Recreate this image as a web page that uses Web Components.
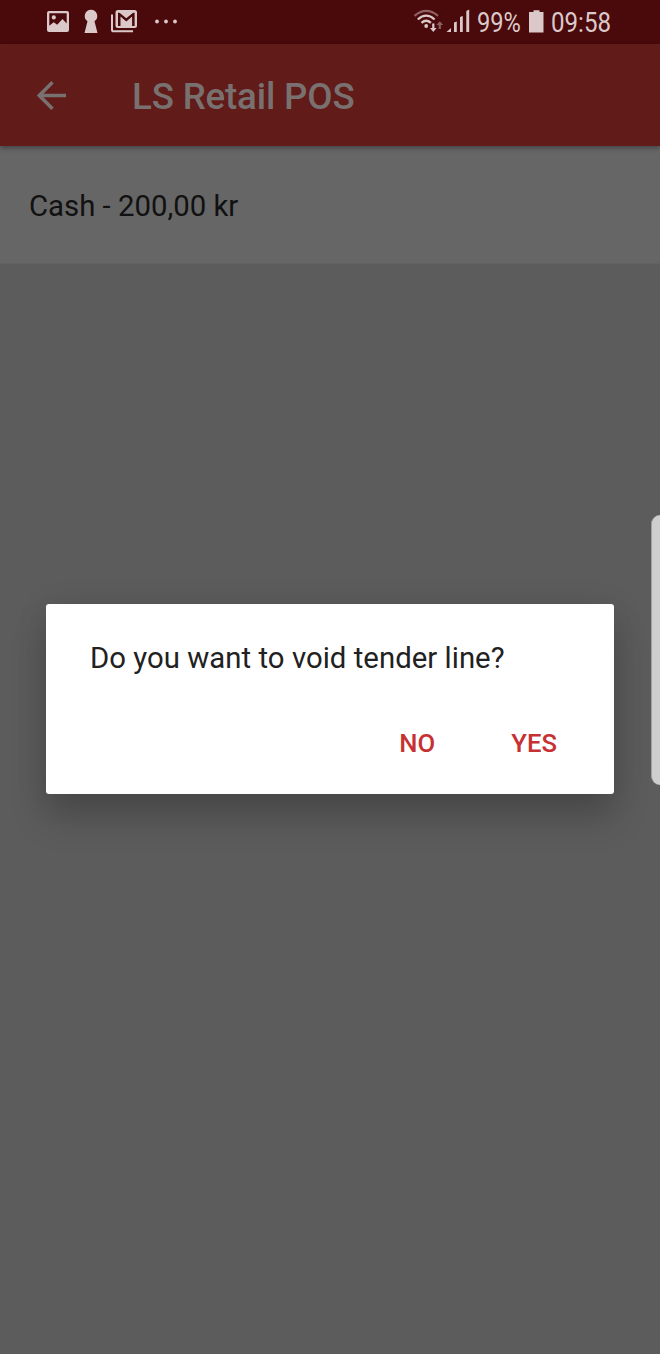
<!DOCTYPE html>
<html lang="en">
<head>
<meta charset="utf-8">
<title>LS Retail POS</title>
<style>
html, body { margin: 0; height: 100%; overflow: hidden; background: #5c5c5c; }
body { font-family: Roboto, "Liberation Sans", sans-serif; }
</style>
</head>
<body>
<pos-screen>
  <status-bar slot="top" level="99%" time="09:58"></status-bar>
  <app-bar slot="top">LS Retail POS</app-bar>
  <tender-line>Cash - 200,00 kr</tender-line>
  <confirm-dialog slot="overlay">
    Do you want to void tender line?
    <dialog-button slot="actions">NO</dialog-button>
    <dialog-button slot="actions">YES</dialog-button>
  </confirm-dialog>
  <edge-handle slot="overlay"></edge-handle>
</pos-screen>
<script>
const define = (name, html, setup) => customElements.define(name, class extends HTMLElement {
  constructor() {
    super();
    this.attachShadow({ mode: 'open' }).innerHTML = html;
  }
  connectedCallback() { if (setup) setup(this, this.shadowRoot); }
});

define('pos-screen', `
<style>
:host { display: flex; flex-direction: column; position: relative; width: 660px; height: 1354px; overflow: hidden; background: #5c5c5c; }
</style>
<slot name="top"></slot><slot></slot><slot name="overlay"></slot>`);

define('status-bar', `
<style>
:host { display: flex; justify-content: space-between; flex: none; height: 44px; background: #4a090b; color: #dbc9ca; }
svg { display: block; flex: none; }
.right { display: flex; align-items: center; width: 247px; }
.text { display: block; flex: none; font-size: 28px; line-height: 44px; padding-top: 1px; height: 43px; white-space: nowrap; }
.text span { display: inline-block; transform-origin: 0 50%; transform: scaleX(.86); }
.level { width: 52px; margin-left: 6px; }
.level span { transform: scaleX(.845); }
.time { width: 62px; margin-left: 7px; }
</style>
<svg width="190" height="44" fill="#dbc9ca">
  <path fill-rule="evenodd" d="M49 11h18a2 2 0 0 1 2 2v17a2 2 0 0 1-2 2H49a2 2 0 0 1-2-2V13a2 2 0 0 1 2-2zm.3 2.300v12.500l4.400-3.600 3.500 2.600 5.300-5.800 4.200 4.600V13.300zM53.800 15.300a2.100 2.100 0 1 1 0 4.200 2.100 2.100 0 0 1 0-4.200z"/>
  <path d="M91 9.700a6.300 6.300 0 0 1 3.500 11.500L97.500 33h-13l3-11.800A6.300 6.300 0 0 1 91 9.700z"/>
  <path fill-rule="evenodd" d="M118 10h16.500a2.500 2.500 0 0 1 2.500 2.500v13a2.500 2.500 0 0 1-2.500 2.500H118a2.500 2.500 0 0 1-2.500-2.500v-13A2.500 2.500 0 0 1 118 10zm0 2.700V26h2.500V16.600l5.800 4.800 5.800-4.800V26h2.500V12.700h-1.500l-6.800 5.500-6.800-5.500z"/>
  <path d="M112 14.500v15.200a1.600 1.600 0 0 0 1.600 1.600H133" fill="none" stroke="#dbc9ca" stroke-width="2"/>
  <circle cx="157" cy="21.500" r="1.900"/><circle cx="166" cy="21.500" r="1.900"/><circle cx="175" cy="21.500" r="1.900"/>
</svg>
<div class="right">
  <svg width="58" height="44">
    <g fill="none" stroke-width="2.300">
      <path d="M1.500 15.800Q13.200 6 25 15.800" stroke="#8f6062"/>
      <path d="M4.800 19.500Q13.200 11.800 21.600 19.500M8.500 22.800Q13.200 18.700 17.900 22.800" stroke="#dbc9ca"/>
    </g>
    <circle cx="13.200" cy="26" r="1.900" fill="#dbc9ca"/>
    <path d="M19.200 23.500h2.200v4.500h2.200L20.300 32l-3.300-4h2.200z" fill="#dbc9ca"/>
    <path d="M25.700 29h2.200v-4h2.200L26.800 21.200 23.400 25h2.300z" fill="#8f6062"/>
    <path d="M33.500 32l4.500-4v4zM41 22.500l2.800-1V32H41zM47 17l2.800-1v16H47zM53.300 11l2.900-1.500V32h-2.900z" fill="#dbc9ca"/>
  </svg>
  <span class="text level"><span></span></span>
  <svg width="15" height="44"><path d="M4.500 10.200h6v1.800h4v20.500H0V12h4.500z" fill="#dbc9ca"/></svg>
  <span class="text time"><span></span></span>
</div>`, (el, root) => {
  root.querySelector('.level span').textContent = el.getAttribute('level');
  root.querySelector('.time span').textContent = el.getAttribute('time');
});

define('app-bar', `
<style>
:host { display: flex; align-items: center; flex: none; position: relative; z-index: 1; height: 102px; box-sizing: border-box; padding: 2px 0 0 37px; background: #611b19; color: #797170; box-shadow: 0 2px 5px rgba(0,0,0,.35); font-size: 36.67px; font-weight: 500; letter-spacing: -.15px; }
svg { display: block; margin-right: 65px; }
</style>
<svg width="30" height="30"><path d="M29 14.500H2.500M15.500 1.300L2.300 14.500l13.200 13.200" fill="none" stroke="#797170" stroke-width="3.500"/></svg><slot></slot>`);

define('tender-line', `
<style>
:host { display: flex; align-items: center; flex: none; height: 118px; box-sizing: border-box; padding: 3px 29px 0; background: #666; color: #111; font-size: 29.33px; border-bottom: 1px solid #626262; }
</style><slot></slot>`);

define('confirm-dialog', `
<style>
:host { display: flex; flex-direction: column; position: absolute; left: 46px; top: 604px; width: 568px; height: 190px; box-sizing: border-box; padding: 36px 44px 16px; border-radius: 3px; background: #fff; color: #212121; font-size: 29.33px; line-height: 36px; letter-spacing: .03px; box-shadow: 0 24px 36px rgba(0,0,0,.18), 0 4px 32px rgba(0,0,0,.1); }
.actions { display: flex; justify-content: flex-end; gap: 44px; margin-top: auto; margin-right: -3px; }
</style><div><slot></slot></div><div class="actions"><slot name="actions"></slot></div>`);

define('dialog-button', `
<style>
:host { display: flex; align-items: center; height: 70px; padding: 0 16px; color: #c63133; font-size: 25.67px; font-weight: 500; }
</style><slot></slot>`);

define('edge-handle', `
<style>
:host { display: block; position: absolute; right: 0; top: 515px; width: 9px; height: 270px; box-sizing: border-box; border-radius: 9px 0 0 9px; background: #cecece; border-left: 1px solid #a0a0a0; }
</style>`);
</script>
</body>
</html>
